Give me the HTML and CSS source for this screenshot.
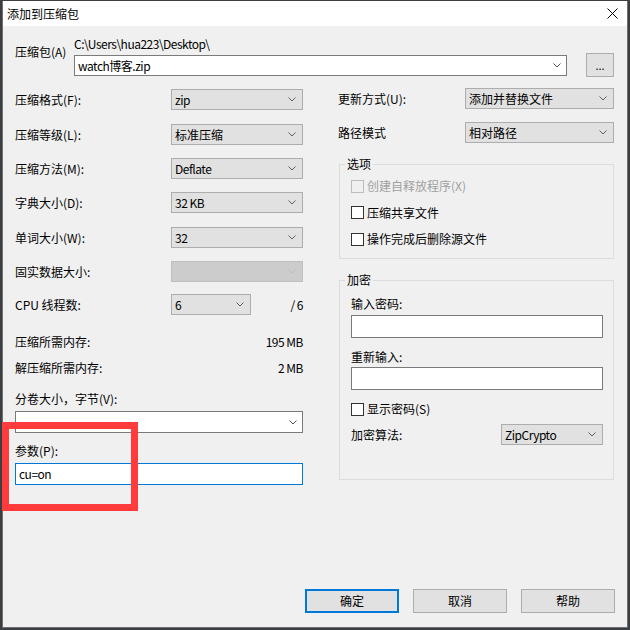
FILE: index.html
```html
<!DOCTYPE html>
<html lang="zh-CN">
<head>
<meta charset="utf-8">
<title>添加到压缩包</title>
<link rel="stylesheet" href="styles.css">
</head>
<body>
<div class="window">
  <div class="titlebar">
    <span class="title">添加到压缩包</span>
    <svg class="close" width="11" height="11" viewBox="0 0 11 11"><path d="M0.5 0.5 L10.5 10.5 M10.5 0.5 L0.5 10.5" stroke="#000" stroke-width="1" fill="none"/></svg>
  </div>

  <div class="top">
    <div class="top-label">压缩包(A)</div>
    <div class="top-main">
      <div class="path lat">C:\Users\hua223\Desktop\</div>
      <div class="combo edit">
        <span class="val lat">watch博客.zip</span>
        <svg class="arrow" width="8" height="5" viewBox="0 0 8 5"><path d="M0.5 0.5 L4 4 L7.5 0.5" fill="none" stroke="#505050"/></svg>
      </div>
    </div>
    <div class="browse">...</div>
  </div>

  <div class="main">
    <div class="col-left">
      <div class="field-row"><span>压缩格式(F):</span><div class="combo"><span class="val lat">zip</span><svg class="arrow" width="8" height="5" viewBox="0 0 8 5"><path d="M0.5 0.5 L4 4 L7.5 0.5" fill="none" stroke="#606060"/></svg></div></div>
      <div class="field-row g14"><span>压缩等级(L):</span><div class="combo"><span class="val">标准压缩</span><svg class="arrow" width="8" height="5" viewBox="0 0 8 5"><path d="M0.5 0.5 L4 4 L7.5 0.5" fill="none" stroke="#606060"/></svg></div></div>
      <div class="field-row"><span>压缩方法(M):</span><div class="combo"><span class="val lat">Deflate</span><svg class="arrow" width="8" height="5" viewBox="0 0 8 5"><path d="M0.5 0.5 L4 4 L7.5 0.5" fill="none" stroke="#606060"/></svg></div></div>
      <div class="field-row"><span>字典大小(D):</span><div class="combo"><span class="val lat">32 KB</span><svg class="arrow" width="8" height="5" viewBox="0 0 8 5"><path d="M0.5 0.5 L4 4 L7.5 0.5" fill="none" stroke="#606060"/></svg></div></div>
      <div class="field-row g14"><span>单词大小(W):</span><div class="combo"><span class="val lat">32</span><svg class="arrow" width="8" height="5" viewBox="0 0 8 5"><path d="M0.5 0.5 L4 4 L7.5 0.5" fill="none" stroke="#606060"/></svg></div></div>
      <div class="field-row"><span>固实数据大小:</span><div class="combo disabled"><span class="val"></span><svg class="arrow" width="8" height="5" viewBox="0 0 8 5"><path d="M0.5 0.5 L4 4 L7.5 0.5" fill="none" stroke="#bdbdbd"/></svg></div></div>
      <div class="field-row cpu"><span>CPU 线程数:</span><div class="combo"><span class="val lat">6</span><svg class="arrow" width="8" height="5" viewBox="0 0 8 5"><path d="M0.5 0.5 L4 4 L7.5 0.5" fill="none" stroke="#606060"/></svg></div><span class="total lat">/ 6</span></div>

      <div class="mem first"><span>压缩所需内存:</span><span class="lat">195 MB</span></div>
      <div class="mem"><span>解压缩所需内存:</span><span class="lat">2 MB</span></div>

      <div class="block-label vol">分卷大小，字节(V):</div>
      <div class="combo edit wide"><span class="val"></span><svg class="arrow" width="8" height="5" viewBox="0 0 8 5"><path d="M0.5 0.5 L4 4 L7.5 0.5" fill="none" stroke="#505050"/></svg></div>

      <div class="block-label">参数(P):</div>
      <div class="input focused lat">cu=on</div>
    </div>

    <div class="col-right">
      <div class="field-row right"><span>更新方式(U):</span><div class="combo"><span class="val">添加并替换文件</span><svg class="arrow" width="8" height="5" viewBox="0 0 8 5"><path d="M0.5 0.5 L4 4 L7.5 0.5" fill="none" stroke="#606060"/></svg></div></div>
      <div class="field-row right"><span>路径模式</span><div class="combo"><span class="val">相对路径</span><svg class="arrow" width="8" height="5" viewBox="0 0 8 5"><path d="M0.5 0.5 L4 4 L7.5 0.5" fill="none" stroke="#606060"/></svg></div></div>

      <fieldset class="group options">
        <legend>选项</legend>
        <div class="check disabled"><span class="cb"></span><span>创建自释放程序(X)</span></div>
        <div class="check"><span class="cb"></span><span>压缩共享文件</span></div>
        <div class="check"><span class="cb"></span><span>操作完成后删除源文件</span></div>
      </fieldset>

      <fieldset class="group crypt">
        <legend>加密</legend>
        <div class="block-label pw1">输入密码:</div>
        <div class="input pw"></div>
        <div class="block-label pw2">重新输入:</div>
        <div class="input pw"></div>
        <div class="check show"><span class="cb"></span><span>显示密码(S)</span></div>
        <div class="algo"><span>加密算法:</span><div class="combo"><span class="val lat">ZipCrypto</span><svg class="arrow" width="8" height="5" viewBox="0 0 8 5"><path d="M0.5 0.5 L4 4 L7.5 0.5" fill="none" stroke="#606060"/></svg></div></div>
      </fieldset>
    </div>
  </div>

  <div class="footer">
    <div class="btn default">确定</div>
    <div class="btn">取消</div>
    <div class="btn">帮助</div>
  </div>
</div>
<div class="mark"></div>
</body>
</html>
```

FILE: styles.css
```css
html, body {
  margin: 0;
  padding: 0;
}
body {
  width: 630px;
  height: 630px;
  overflow: hidden;
  background: #3b3e43;
  font-family: "Noto Sans CJK SC", "Noto Sans", sans-serif;
  font-size: 12px;
  line-height: 16px;
  color: #000;
}
.lat { letter-spacing: -0.5px; }
.window {
  box-sizing: border-box;
  margin: 1px 0 0 2px;
  width: 626px;
  height: 627px;
  background: #f0f0f0;
  border: 1px solid #6f6f6f;
  border-top: none;
  display: flex;
  flex-direction: column;
}
.titlebar {
  height: 25px;
  background: #fff;
  display: flex;
  align-items: center;
  justify-content: space-between;
  padding: 0 9px 0 4px;
}
.title { line-height: 25px; }
.close { display: block; }

.top {
  display: flex;
  padding: 10px 13px 0 12px;
}
.top-label {
  width: 59px;
  padding-top: 8px;
}
.top-main {
  width: 493px;
}
.path { margin-bottom: 3px; }
.browse {
  box-sizing: border-box;
  margin: 17px 0 0 19px;
  width: 28px;
  height: 24px;
  background: #e1e1e1;
  border: 1px solid #adadad;
  text-align: center;
  line-height: 22px;
  font-size: 11px;
}

.combo {
  box-sizing: border-box;
  height: 21px;
  background: #e1e1e1;
  border: 1px solid #adadad;
  display: flex;
  align-items: center;
  justify-content: space-between;
  padding: 0 6px 0 3px;
}
.combo .val { white-space: nowrap; }
.combo .arrow { display: block; flex: none; }
.combo.edit {
  background: #fff;
  border-color: #7a7a7a;
  padding: 0 5px 0 3px;
}
.combo.disabled {
  background: #cccccc;
  border-color: #bfbfbf;
}

.main {
  display: grid;
  grid-template-columns: 288px 276px;
  column-gap: 35px;
  padding: 0 13px 0 12px;
  margin-top: 12px;
}

.field-row {
  display: grid;
  grid-template-columns: 156px 132px;
  align-items: center;
  height: 21px;
}
.field-row + .field-row { margin-top: 13px; }
.field-row.g14 { margin-top: 14px; }
.field-row.cpu {
  grid-template-columns: 156px 80px 1fr;
  margin-top: 12px;
}
.total { text-align: right; }

.mem {
  display: flex;
  justify-content: space-between;
  margin-top: 10px;
}
.mem.first { margin-top: 19px; }

.block-label { margin-top: 10px; margin-bottom: 4px; }
.block-label.vol { margin-top: 15px; }
.combo.wide { height: 22px; }

.input {
  box-sizing: border-box;
  height: 22px;
  background: #fff;
  border: 1px solid #7a7a7a;
  padding: 0 3px;
  line-height: 20px;
}
.input.focused { border-color: #0078d7; }

.col-right { margin-top: -1px; }
.field-row.right { grid-template-columns: 127px 149px; }

.group {
  margin: 13px 0 0 1px;
  border: 1px solid #dcdcdc;
  padding: 0 10px 11px 11px;
  min-width: 0;
}
.group legend {
  padding: 0 2px;
  margin-left: -6px;
  line-height: 16px;
}
.options {
  display: flex;
  flex-direction: column;
  gap: 10.5px;
  padding-top: 6px;
}
.check {
  display: flex;
  align-items: center;
  height: 16px;
}
.cb {
  box-sizing: border-box;
  width: 13px;
  height: 13px;
  border: 1px solid #333;
  background: #fff;
  margin-right: 3px;
  flex: none;
}
.check.disabled { color: #a0a0a0; }
.check.disabled .cb { border-color: #bcbcbc; background: #f0f0f0; }

.crypt { padding-top: 8px; padding-bottom: 34px; }
.crypt .block-label.pw1 { margin: 0 0 3px; }
.crypt .block-label.pw2 { margin: 11px 0 2px; }
.input.pw { height: 23px; }
.check.show { margin-top: 11px; }
.algo {
  display: flex;
  align-items: center;
  justify-content: space-between;
  margin-top: 7px;
}
.algo .combo { width: 102px; }

.footer {
  margin-top: auto;
  display: flex;
  justify-content: flex-end;
  gap: 14px;
  padding: 0 12px 14px 0;
}
.btn {
  box-sizing: border-box;
  width: 94px;
  height: 24px;
  background: #e1e1e1;
  border: 1px solid #adadad;
  text-align: center;
  line-height: 22px;
}
.btn.default {
  border: 2px solid #0078d7;
  line-height: 20px;
}

.mark {
  position: absolute;
  left: 2px;
  top: 422px;
  width: 136px;
  height: 89px;
  box-sizing: border-box;
  border: 7px solid #ff3b3b;
}
```
